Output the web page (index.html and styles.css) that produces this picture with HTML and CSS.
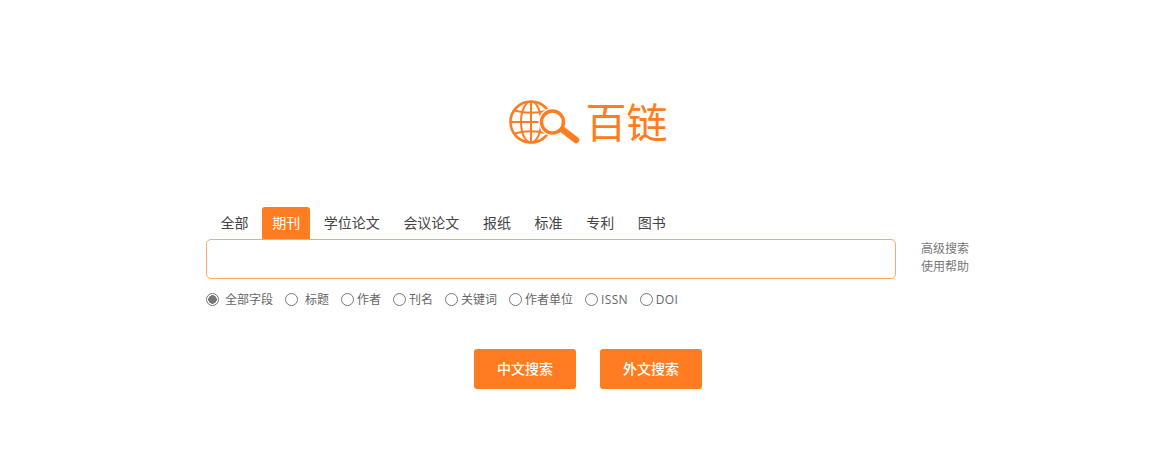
FILE: index.html
```html
<!DOCTYPE html>
<html lang="zh-CN">

<head>
    <title>百链</title>
    <link rel="stylesheet" href="styles.css">
</head>

<body>
    <div class="container">
        <div class="logo">
            <svg class="logo-icon" width="72" height="48" viewBox="0 0 72 48" fill="none" stroke="#ff7d20">
                <g stroke-width="2">
                    <circle cx="22" cy="24" r="20.5" stroke-width="2.6"/>
                    <ellipse cx="22" cy="24" rx="10" ry="20.5"/>
                    <path d="M22 3.5V44.5"/>
                    <path d="M2 24H42"/>
                    <path d="M5.5 12.5Q22 17 38.5 12.5"/>
                    <path d="M5.5 35.5Q22 31 38.5 35.5"/>
                </g>
                <circle cx="43.5" cy="24" r="14" fill="#fff" stroke="none"/>
                <circle cx="43.5" cy="24" r="11" fill="#fff" stroke-width="3.4"/>
                <path d="M54 32L67 42" stroke-width="6.5" stroke-linecap="round"/>
            </svg>
            <span class="logo-text">百链</span>
        </div>

        <ul class="tabs">
            <li>全部</li>
            <li class="active">期刊</li>
            <li>学位论文</li>
            <li>会议论文</li>
            <li>报纸</li>
            <li>标准</li>
            <li>专利</li>
            <li>图书</li>
        </ul>

        <div class="search-row">
            <input type="text" class="search-input">
            <div class="side-links">
                <a href="#">高级搜索</a>
                <a href="#">使用帮助</a>
            </div>
        </div>

        <form class="fields">
            <label class="wide"><input type="radio" name="field" checked>全部字段</label>
            <label class="wider"><input type="radio" name="field">标题</label>
            <label><input type="radio" name="field">作者</label>
            <label><input type="radio" name="field">刊名</label>
            <label><input type="radio" name="field">关键词</label>
            <label><input type="radio" name="field">作者单位</label>
            <label class="latin"><input type="radio" name="field">ISSN</label>
            <label class="latin"><input type="radio" name="field">DOI</label>
        </form>

        <div class="buttons">
            <button type="button">中文搜索</button>
            <button type="button">外文搜索</button>
        </div>
    </div>
</body>

</html>
```

FILE: styles.css
```css
body { margin: 0; background: #fff; color: #555; font-family: "Open Sans", "Noto Sans CJK SC", sans-serif; }
.container { width: 764px; margin-left: 206px; padding-top: 98px; }

.logo { display: flex; justify-content: center; align-items: center; height: 48px; margin-bottom: 61px; }
.logo-icon { margin-right: 5px; }
.logo-text { font-family: "Noto Sans CJK SC", sans-serif; font-size: 41px; line-height: 44px; height: 48px; color: #ff7d20; font-weight: 400; }

.tabs { display: flex; gap: 3.6px; list-style: none; margin: 0 0 0 4.6px; padding: 0; }
.tabs li { padding: 0 10px; height: 32px; line-height: 32px; font-size: 14px; color: #444; border-radius: 3px 3px 0 0; }
.tabs li.active { background: #ff7d20; color: #fff; }

.search-row { display: flex; align-items: center; gap: 25px; }
.search-input { width: 690px; height: 40px; box-sizing: border-box; border: 1px solid #ffa76b; border-radius: 5px; outline: none; }
.side-links { margin-top: -2px; }
.side-links a { display: block; font-size: 12px; line-height: 18px; color: #777; text-decoration: none; }

.fields { display: flex; gap: 12px; margin-top: 12px; height: 16px; font-size: 12px; line-height: 15px; color: #666; }
.fields label { display: flex; align-items: center; gap: 3px; }
.fields label.wide { gap: 6px; }
.fields label.wider { gap: 7px; }
.fields label.latin { letter-spacing: 0.3px; }
.fields input { appearance: none; width: 13px; height: 13px; margin: 0; border: 1px solid #777; border-radius: 50%; background: #fff; }
.fields input:checked { background: radial-gradient(circle, #777 0 4px, #fff 4.5px); }

.buttons { display: flex; justify-content: center; gap: 24px; margin-top: 42px; }
.buttons button { width: 102px; height: 40px; padding: 0 0 2px; border: none; border-radius: 3px; background: #ff7d20; color: #fff; font-family: inherit; font-size: 14px; font-weight: 500; cursor: pointer; }
```
